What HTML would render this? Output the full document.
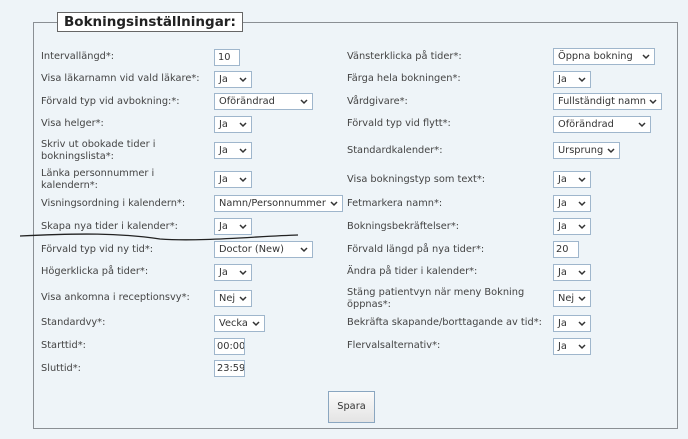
<!DOCTYPE html>
<html><head><meta charset="utf-8"><style>
*{margin:0;padding:0;box-sizing:border-box}
body{width:688px;height:439px;background:#eef4f8;position:relative;overflow:hidden;font-family:"DejaVu Sans","Liberation Sans",sans-serif;font-size:9.8px;color:#444}
.fs{position:absolute;left:33px;top:22px;width:645px;height:407px;border:1px solid #8a8f94}
.lg{position:absolute;left:57px;top:12px;width:186px;height:20px;border:1px solid #666;background:#fff;font-weight:bold;font-size:13.5px;color:#222;padding-left:6px;line-height:18px}
.l{position:absolute;line-height:12px;white-space:nowrap}
.b{position:absolute;height:17px;border:1px solid #9fb6cc;background:#fff;line-height:15px;padding-left:4px;color:#333;white-space:nowrap;overflow:hidden}
.b svg{position:absolute;right:4px;top:5px}
.btn{position:absolute;left:328px;top:391px;width:47px;height:32px;border:1px solid #8aa6c0;background:linear-gradient(#fafafa,#e4e4e4);text-align:center;line-height:30px;color:#333}
</style></head><body>
<div class="fs"></div>
<div class="lg">Bokningsinställningar:</div>

<div class="l" style="left:41px;top:51px">Intervallängd*:</div>
<div class="b" style="left:214px;top:49px;width:26px;padding-left:3px">10</div>
<div class="l" style="left:41px;top:73px">Visa läkarnamn vid vald läkare*:</div>
<div class="b" style="left:214px;top:71px;width:38px">Ja<svg width="8" height="6"><path d="M1 1l3 3 3-3" stroke="#333" stroke-width="1.5" fill="none"/></svg></div>
<div class="l" style="left:41px;top:96px">Förvald typ vid avbokning:*:</div>
<div class="b" style="left:214px;top:93px;width:99px">Oförändrad<svg width="8" height="6"><path d="M1 1l3 3 3-3" stroke="#333" stroke-width="1.5" fill="none"/></svg></div>
<div class="l" style="left:41px;top:118px">Visa helger*:</div>
<div class="b" style="left:214px;top:116px;width:38px">Ja<svg width="8" height="6"><path d="M1 1l3 3 3-3" stroke="#333" stroke-width="1.5" fill="none"/></svg></div>
<div class="l" style="left:41px;top:139px">Skriv ut obokade tider i<br>bokningslista*:</div>
<div class="b" style="left:214px;top:142px;width:38px">Ja<svg width="8" height="6"><path d="M1 1l3 3 3-3" stroke="#333" stroke-width="1.5" fill="none"/></svg></div>
<div class="l" style="left:41px;top:168px">Länka personnummer i<br>kalendern*:</div>
<div class="b" style="left:214px;top:171px;width:38px">Ja<svg width="8" height="6"><path d="M1 1l3 3 3-3" stroke="#333" stroke-width="1.5" fill="none"/></svg></div>
<div class="l" style="left:41px;top:198px">Visningsordning i kalendern*:</div>
<div class="b" style="left:214px;top:195px;width:129px">Namn/Personnummer<svg width="8" height="6"><path d="M1 1l3 3 3-3" stroke="#333" stroke-width="1.5" fill="none"/></svg></div>
<div class="l" style="left:41px;top:221px">Skapa nya tider i kalender*:</div>
<div class="b" style="left:214px;top:218px;width:38px">Ja<svg width="8" height="6"><path d="M1 1l3 3 3-3" stroke="#333" stroke-width="1.5" fill="none"/></svg></div>
<div class="l" style="left:41px;top:244px">Förvald typ vid ny tid*:</div>
<div class="b" style="left:214px;top:241px;width:99px">Doctor (New)<svg width="8" height="6"><path d="M1 1l3 3 3-3" stroke="#333" stroke-width="1.5" fill="none"/></svg></div>
<div class="l" style="left:41px;top:266px">Högerklicka på tider*:</div>
<div class="b" style="left:214px;top:264px;width:38px">Ja<svg width="8" height="6"><path d="M1 1l3 3 3-3" stroke="#333" stroke-width="1.5" fill="none"/></svg></div>
<div class="l" style="left:41px;top:292px">Visa ankomna i receptionsvy*:</div>
<div class="b" style="left:214px;top:290px;width:38px">Nej<svg width="8" height="6"><path d="M1 1l3 3 3-3" stroke="#333" stroke-width="1.5" fill="none"/></svg></div>
<div class="l" style="left:41px;top:317px">Standardvy*:</div>
<div class="b" style="left:214px;top:315px;width:51px">Vecka<svg width="8" height="6"><path d="M1 1l3 3 3-3" stroke="#333" stroke-width="1.5" fill="none"/></svg></div>
<div class="l" style="left:41px;top:340px">Starttid*:</div>
<div class="b" style="left:214px;top:338px;width:31px;padding-left:2px">00:00</div>
<div class="l" style="left:41px;top:363px">Sluttid*:</div>
<div class="b" style="left:214px;top:360px;width:31px;padding-left:2px">23:59</div>

<div class="l" style="left:347px;top:51px">Vänsterklicka på tider*:</div>
<div class="b" style="left:553px;top:48px;width:102px">Öppna bokning<svg width="8" height="6"><path d="M1 1l3 3 3-3" stroke="#333" stroke-width="1.5" fill="none"/></svg></div>
<div class="l" style="left:347px;top:73px">Färga hela bokningen*:</div>
<div class="b" style="left:553px;top:71px;width:38px">Ja<svg width="8" height="6"><path d="M1 1l3 3 3-3" stroke="#333" stroke-width="1.5" fill="none"/></svg></div>
<div class="l" style="left:347px;top:96px">Vårdgivare*:</div>
<div class="b" style="left:553px;top:93px;width:109px">Fullständigt namn<svg width="8" height="6"><path d="M1 1l3 3 3-3" stroke="#333" stroke-width="1.5" fill="none"/></svg></div>
<div class="l" style="left:347px;top:118px">Förvald typ vid flytt*:</div>
<div class="b" style="left:553px;top:116px;width:98px">Oförändrad<svg width="8" height="6"><path d="M1 1l3 3 3-3" stroke="#333" stroke-width="1.5" fill="none"/></svg></div>
<div class="l" style="left:347px;top:145px">Standardkalender*:</div>
<div class="b" style="left:553px;top:142px;width:67px">Ursprung<svg width="8" height="6"><path d="M1 1l3 3 3-3" stroke="#333" stroke-width="1.5" fill="none"/></svg></div>
<div class="l" style="left:347px;top:174px">Visa bokningstyp som text*:</div>
<div class="b" style="left:553px;top:171px;width:38px">Ja<svg width="8" height="6"><path d="M1 1l3 3 3-3" stroke="#333" stroke-width="1.5" fill="none"/></svg></div>
<div class="l" style="left:347px;top:198px">Fetmarkera namn*:</div>
<div class="b" style="left:553px;top:195px;width:38px">Ja<svg width="8" height="6"><path d="M1 1l3 3 3-3" stroke="#333" stroke-width="1.5" fill="none"/></svg></div>
<div class="l" style="left:347px;top:221px">Bokningsbekräftelser*:</div>
<div class="b" style="left:553px;top:218px;width:38px">Ja<svg width="8" height="6"><path d="M1 1l3 3 3-3" stroke="#333" stroke-width="1.5" fill="none"/></svg></div>
<div class="l" style="left:347px;top:244px">Förvald längd på nya tider*:</div>
<div class="b" style="left:553px;top:241px;width:26px;padding-left:2px">20</div>
<div class="l" style="left:347px;top:266px">Ändra på tider i kalender*:</div>
<div class="b" style="left:553px;top:264px;width:38px">Ja<svg width="8" height="6"><path d="M1 1l3 3 3-3" stroke="#333" stroke-width="1.5" fill="none"/></svg></div>
<div class="l" style="left:347px;top:287px">Stäng patientvyn när meny Bokning<br>öppnas*:</div>
<div class="b" style="left:553px;top:290px;width:38px">Nej<svg width="8" height="6"><path d="M1 1l3 3 3-3" stroke="#333" stroke-width="1.5" fill="none"/></svg></div>
<div class="l" style="left:347px;top:317px">Bekräfta skapande/borttagande av tid*:</div>
<div class="b" style="left:553px;top:315px;width:38px">Ja<svg width="8" height="6"><path d="M1 1l3 3 3-3" stroke="#333" stroke-width="1.5" fill="none"/></svg></div>
<div class="l" style="left:347px;top:340px">Flervalsalternativ*:</div>
<div class="b" style="left:553px;top:338px;width:38px">Ja<svg width="8" height="6"><path d="M1 1l3 3 3-3" stroke="#333" stroke-width="1.5" fill="none"/></svg></div>

<div class="btn">Spara</div>
<svg style="position:absolute;left:0;top:0" width="688" height="439"><path d="M20 236 C80 233 120 233 160 239 C200 242 260 236 298 235" stroke="#222" stroke-width="1.3" fill="none"/></svg>
</body></html>
